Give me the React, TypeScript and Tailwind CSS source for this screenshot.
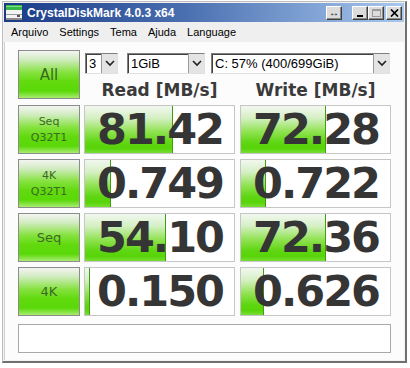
import React from "react";

const rows = [
  { l1: "Seq", l2: "Q32T1", r: "81.42", rw: 88, w: "72.28", ww: 85 },
  { l1: "4K", l2: "Q32T1", r: "0.749", rw: 26, w: "0.722", ww: 25 },
  { l1: "Seq", l2: "", r: "54.10", rw: 81, w: "72.36", ww: 85 },
  { l1: "4K", l2: "", r: "0.150", rw: 5, w: "0.626", ww: 23 },
];

const btnGrad =
  "bg-[linear-gradient(to_bottom,#f3f5f1_0%,#d2ecc2_18%,#86e240_45%,#62da0e_65%,#5ad808_85%,#a8ec70_100%)]";

function Chevron() {
  return (
    <svg width="10" height="7" viewBox="0 0 10 7">
      <polyline points="1,1 5,5 9,1" fill="none" stroke="#222" strokeWidth="1.6" />
    </svg>
  );
}

function Select({ w, ml, text }: { w: string; ml: string; text: string }) {
  return (
    <div
      className={`${w} ${ml} h-[21px] flex bg-white border border-t-[#808080] border-l-[#808080] border-r-[#e0e0e0] border-b-[#e0e0e0] shadow-[inset_1px_1px_0_#404040]`}
    >
      <div className="flex-1 flex items-center pl-[3px] text-[13px] text-black leading-none overflow-hidden whitespace-nowrap">
        {text}
      </div>
      <div className="w-[16px] h-full flex items-center justify-center bg-[#e4e4e4] border-l border-[#9a9a9a]">
        <Chevron />
      </div>
    </div>
  );
}

function SideButton({ l1, l2, big }: { l1: string; l2?: string; big?: boolean }) {
  return (
    <div
      className={`w-[62px] h-[49px] shrink-0 border border-[#8c8c8c] ${btnGrad} flex flex-col items-center justify-center text-[#3a6a22] leading-[16px]`}
      style={{ fontFamily: '"DejaVu Sans", sans-serif' }}
    >
      {big ? (
        <span className="text-[15px]">{l1}</span>
      ) : l2 ? (
        <>
          <span className="text-[11px]">{l1}</span>
          <span className="text-[11px]">{l2}</span>
        </>
      ) : (
        <span className="text-[13px]">{l1}</span>
      )}
    </div>
  );
}

function ValueBox({ value, bar, ml }: { value: string; bar: number; ml: string }) {
  return (
    <div className={`relative w-[151px] h-[49px] ${ml} border border-[#c6c6c6] bg-white overflow-hidden`}>
      <div
        className="absolute left-0 top-0 bottom-0 border-r border-[#3f9c14] bg-[linear-gradient(to_bottom,#f2f7ef_0%,#d6f0c6_25%,#8fe250_55%,#5fd612_78%,#58d408_90%,#78de36_100%)]"
        style={{ width: bar }}
      />
      <div
        className="relative h-full flex items-center justify-end pr-[11px] text-[43px] font-bold tracking-[-2px] text-[#353535] leading-none"
        style={{ fontFamily: '"DejaVu Sans", sans-serif' }}
      >
        {value}
      </div>
    </div>
  );
}

function TitleButton({ children, ml }: { children: React.ReactNode; ml?: string }) {
  return (
    <div
      className={`w-[16px] h-[14px] ${ml ?? ""} flex items-center justify-center bg-[#dcdcdc] border border-t-white border-l-white border-r-[#404040] border-b-[#404040] shadow-[inset_-1px_-1px_0_#8a8a8a]`}
    >
      {children}
    </div>
  );
}

export default function App() {
  return (
    <div
      className="w-[410px] h-[368px] bg-white pt-[1px] pl-[2px] overflow-hidden"
      style={{ fontFamily: '"Liberation Sans", Arial, sans-serif' }}
    >
      <div className="w-[405px] h-[362px] flex flex-col p-[1px] bg-[#f2f2f2] border-l border-t border-[#bdbdbd] border-r-2 border-b-2 border-r-[#707070] border-b-[#707070]">
        {/* Title bar */}
        <div className="h-[19px] flex items-center bg-[linear-gradient(to_right,#1a3a86,#4a6fb0_45%,#a8c8ee)] pr-[2px]">
          <svg width="16" height="15" viewBox="0 0 16 15" className="ml-[2px]">
            <rect x="0" y="0" width="16" height="5" fill="#38b848" />
            <rect x="0" y="1" width="16" height="1" fill="#7ee08a" />
            <rect x="0" y="5" width="16" height="10" fill="#f4f4f4" />
            <rect x="0" y="9" width="16" height="1" fill="#9a9a9a" />
            <rect x="0" y="13" width="16" height="2" fill="#8a8a8a" />
            <rect x="11" y="10" width="3" height="2" fill="#555" />
          </svg>
          <span className="ml-[5px] text-white font-bold text-[12px] leading-none whitespace-nowrap">
            CrystalDiskMark 4.0.3 x64
          </span>
          <div className="flex-1" />
          <TitleButton>
            <span className="text-[10px] leading-none text-black">↔</span>
          </TitleButton>
          <TitleButton ml="ml-[10px]">
            <div className="w-[6px] h-[2px] bg-black mt-[6px]" />
          </TitleButton>
          <TitleButton>
            <div className="w-[9px] h-[8px] border border-[#9a9a9a] border-t-2" />
          </TitleButton>
          <TitleButton ml="ml-[2px]">
            <svg width="9" height="8" viewBox="0 0 9 8">
              <path d="M1 0.5 L8 7.5 M8 0.5 L1 7.5" stroke="#000" strokeWidth="1.7" />
            </svg>
          </TitleButton>
        </div>

        {/* Menu bar */}
        <div className="h-[20px] flex items-center pl-[7px] gap-[11px] text-[11px] text-black bg-[#efefef]">
          <span>Arquivo</span>
          <span>Settings</span>
          <span>Tema</span>
          <span>Ajuda</span>
          <span>Language</span>
        </div>

        {/* Body */}
        <div className="flex-1 bg-[#fcfcfc] border-l border-[#d0d0d0] pl-[13px] pt-[8px]">
          <div className="flex">
            <SideButton l1="All" big />
            <div className="ml-[4px] w-[307px] flex flex-col">
              <div className="mt-[3px] flex">
                <Select w="w-[33px]" ml="ml-[1px]" text="3" />
                <Select w="w-[78px]" ml="ml-[9px]" text="1GiB" />
                <Select w="w-[179px]" ml="ml-[6px]" text="C: 57% (400/699GiB)" />
              </div>
              <div
                className="flex pt-[7px] text-[17px] font-bold text-[#3a3a3a] leading-[18px]"
                style={{ fontFamily: '"DejaVu Sans", sans-serif' }}
              >
                <div className="w-[151px] text-center">Read [MB/s]</div>
                <div className="w-[151px] ml-[5px] text-center">Write [MB/s]</div>
              </div>
            </div>
          </div>

          <div className="flex flex-col gap-[5px] mt-[6px]">
            {rows.map((r, i) => (
              <div key={i} className="flex">
                <SideButton l1={r.l1} l2={r.l2} />
                <ValueBox value={r.r} bar={r.rw} ml="ml-[4px]" />
                <ValueBox value={r.w} bar={r.ww} ml="ml-[5px]" />
              </div>
            ))}
          </div>

          <div className="mt-[8px] w-[373px] h-[29px] bg-white border border-[#a8a8a8]" />
        </div>
      </div>
    </div>
  );
}
